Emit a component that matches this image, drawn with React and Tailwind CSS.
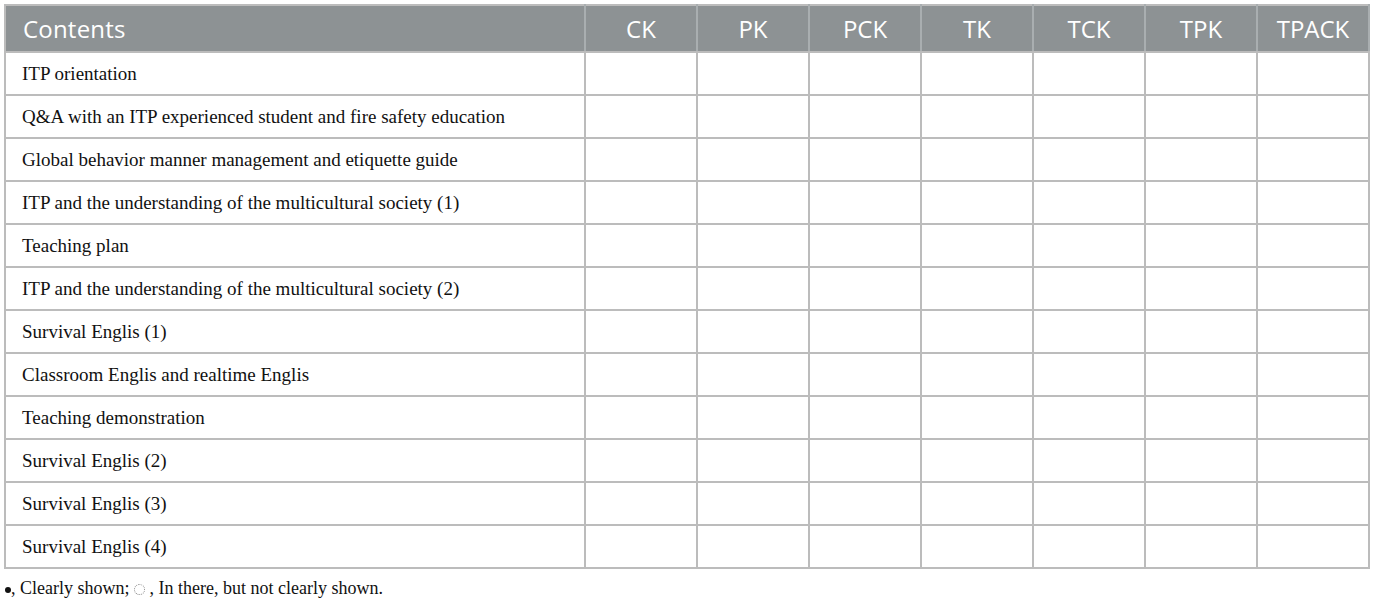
export default function App() {
  const rows = [
    "ITP orientation",
    "Q&A with an ITP experienced student and fire safety education",
    "Global behavior manner management and etiquette guide",
    "ITP and the understanding of the multicultural society (1)",
    "Teaching plan",
    "ITP and the understanding of the multicultural society (2)",
    "Survival Englis (1)",
    "Classroom Englis and realtime Englis",
    "Teaching demonstration",
    "Survival Englis (2)",
    "Survival Englis (3)",
    "Survival Englis (4)",
  ];
  const cols = ["CK", "PK", "PCK", "TK", "TCK", "TPK", "TPACK"];
  return (
    <div className="bg-white w-[1375px] h-[601px] pt-[4px] pl-[4px]">
      <table className="border-collapse table-fixed w-[1366px]">
        <colgroup>
          <col className="w-[580px]" />
          {cols.map((c) => (
            <col key={c} className="w-[112px]" />
          ))}
        </colgroup>
        <thead>
          <tr className="bg-[#8d9294] h-[47px]">
            <th className="border-2 border-[#bcbcbc] border-r-[#a9aeb0] text-left pl-[17px] font-normal text-white text-[24px] tracking-[0.2px] font-['Open_Sans',sans-serif]">
              Contents
            </th>
            {cols.map((c) => (
              <th
                key={c}
                className="border-2 border-[#bcbcbc] border-x-[#a9aeb0] text-center font-normal text-white text-[24px] font-['Open_Sans',sans-serif]"
              >
                {c}
              </th>
            ))}
          </tr>
        </thead>
        <tbody>
          {rows.map((r, i) => (
            <tr key={i} className="h-[43px]">
              <td className="border-2 border-[#bcbcbc] pl-[16px] pt-[2px] text-[19px] text-[#111] font-['Liberation_Serif',serif]">
                {r}
              </td>
              {cols.map((c) => (
                <td key={c} className="border-2 border-[#bcbcbc]"></td>
              ))}
            </tr>
          ))}
        </tbody>
      </table>
      <p className="mt-[7px] leading-[24px] text-[18px] text-[#111] font-['Liberation_Serif',serif]">
        <span className="inline-block w-[6px] h-[6px] rounded-full bg-[#111] ml-[1px] align-[1px]"></span>, Clearly shown;{" "}
        <span className="inline-block w-[11px] h-[11px] rounded-full border border-dotted border-[#888] align-[-1px]"></span>{" "}
        , In there, but not clearly shown.
      </p>
    </div>
  );
}
